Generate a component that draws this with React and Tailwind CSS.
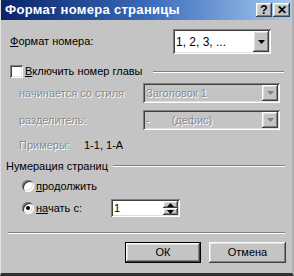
import React from 'react'

const raised = 'bg-[#c4c4c4] shadow-[inset_-1px_-1px_#404040,inset_1px_1px_#ffffff,inset_-2px_-2px_#808080,inset_2px_2px_#dfdfdf]'
const sunken = 'shadow-[inset_1px_1px_#808080,inset_-1px_-1px_#ffffff,inset_2px_2px_#404040,inset_-2px_-2px_#dfdfdf]'
const dim = 'text-[#8a8a8a] [text-shadow:1px_1px_#ffffff]'

function Arrow({ down = true, color = '#000' }) {
  return (
    <svg width="7" height="4" viewBox="0 0 7 4">
      <path d={down ? 'M0 0h7L3.5 4z' : 'M0 4h7L3.5 0z'} fill={color} />
    </svg>
  )
}

function Combo({ children, disabled, className }) {
  return (
    <div className={`flex items-center ${disabled ? 'bg-[#c4c4c4]' : 'bg-white'} ${sunken} p-[2px] ${className}`}>
      <div className="flex-1 pl-[1px] truncate">{children}</div>
      <div className={`${raised} w-[16px] h-full flex items-center justify-center`}>
        <Arrow color={disabled ? '#808080' : '#000'} />
      </div>
    </div>
  )
}

function Groove({ className = '' }) {
  return <div className={`h-[2px] border-t border-[#808080] border-b border-b-white ${className}`} />
}

export default function App() {
  return (
    <div className="w-[294px] h-[276px] bg-[#c4c4c4] flex flex-col text-[11px] text-black border-l border-l-[#e0e0e0] border-r-2 border-r-[#b0b0b0] border-b-[3px] border-b-[#303030] overflow-hidden" style={{ fontFamily: '"Liberation Sans", Arial, sans-serif' }}>
      <div className="h-[20px] flex items-center pl-[4px] pr-[2px] bg-gradient-to-r from-[#0a246a] via-[#3a6ab8] to-[#a6caf0]">
        <span className="text-white font-bold text-[13px] tracking-[0.3px]">Формат номера страницы</span>
        <div className="ml-auto flex gap-[1px]">
          <div className={`${raised} w-[16px] h-[14px] flex items-center justify-center font-bold text-[12px] leading-none`}>?</div>
          <div className={`${raised} w-[17px] h-[14px] flex items-center justify-center font-bold text-[12px] leading-none`}>✕</div>
        </div>
      </div>

      <div className="flex items-center h-[25px] mt-[9px] pl-[9px] pr-[21px]">
        <span><span className="underline">Ф</span>ормат номера:</span>
        <Combo className="ml-auto w-[98px] h-[25px] text-[12px]">1, 2, 3, ...</Combo>
      </div>

      <div className="flex items-center h-[13px] mt-[11px] pl-[9px] pr-[8px]">
        <div className={`w-[13px] h-[13px] bg-white ${sunken}`} />
        <span className="ml-[2px]"><span className="underline">В</span>ключить номер главы</span>
        <Groove className="flex-1 ml-[10px]" />
      </div>

      <div className="flex items-center h-[20px] mt-[5px] pl-[18px] pr-[12px]">
        <span className={dim}>начинается со стиля</span>
        <Combo disabled className={`ml-auto w-[137px] h-[20px] ${dim}`}>Заголовок 1</Combo>
      </div>

      <div className="flex items-center h-[20px] mt-[7px] pl-[18px] pr-[12px]">
        <span className={dim}>разделитель:</span>
        <Combo disabled className={`ml-auto w-[137px] h-[20px] ${dim}`}>
          <span>-</span><span className="ml-[22px]">(дефис)</span>
        </Combo>
      </div>

      <div className="flex items-center h-[12px] mt-[9px] pl-[18px]">
        <span className={`${dim} w-[65px]`}>Примеры:</span>
        <span>1-1, 1-А</span>
      </div>

      <div className="flex items-center h-[12px] mt-[9px] pl-[5px] pr-[7px]">
        <span>Нумерация страниц</span>
        <Groove className="flex-1 ml-[5px]" />
      </div>

      <div className="flex items-center h-[12px] mt-[8px] pl-[21px]">
        <div className={`w-[12px] h-[12px] rounded-full bg-white ${sunken}`} />
        <span className="ml-[2px]"><span className="underline">п</span>родолжить</span>
      </div>

      <div className="flex items-center h-[18px] mt-[7px] pl-[21px]">
        <div className={`w-[12px] h-[12px] rounded-full bg-white ${sunken} flex items-center justify-center`}>
          <div className="w-[4px] h-[4px] rounded-full bg-black" />
        </div>
        <span className="ml-[2px] w-[74px]"><span className="underline">на</span>чать с:</span>
        <div className={`flex items-center w-[69px] h-[18px] bg-white ${sunken} p-[2px] ml-[1px]`}>
          <span className="flex-1 pl-[1px]">1</span>
          <div className="flex flex-col w-[15px] h-full">
            <div className={`${raised} flex-1 flex items-center justify-center`}><Arrow down={false} /></div>
            <div className={`${raised} flex-1 flex items-center justify-center`}><Arrow /></div>
          </div>
        </div>
      </div>

      <Groove className="mt-[15px] mx-[7px]" />

      <div className="flex items-center h-[21px] mt-[8px] pr-[6px] gap-[8px] justify-end">
        <div className="w-[76px] h-[21px] border border-black flex">
          <div className={`${raised} flex-1 flex items-center justify-center`}>ОК</div>
        </div>
        <div className={`${raised} w-[77px] h-[21px] flex items-center justify-center`}>Отмена</div>
      </div>
    </div>
  )
}
